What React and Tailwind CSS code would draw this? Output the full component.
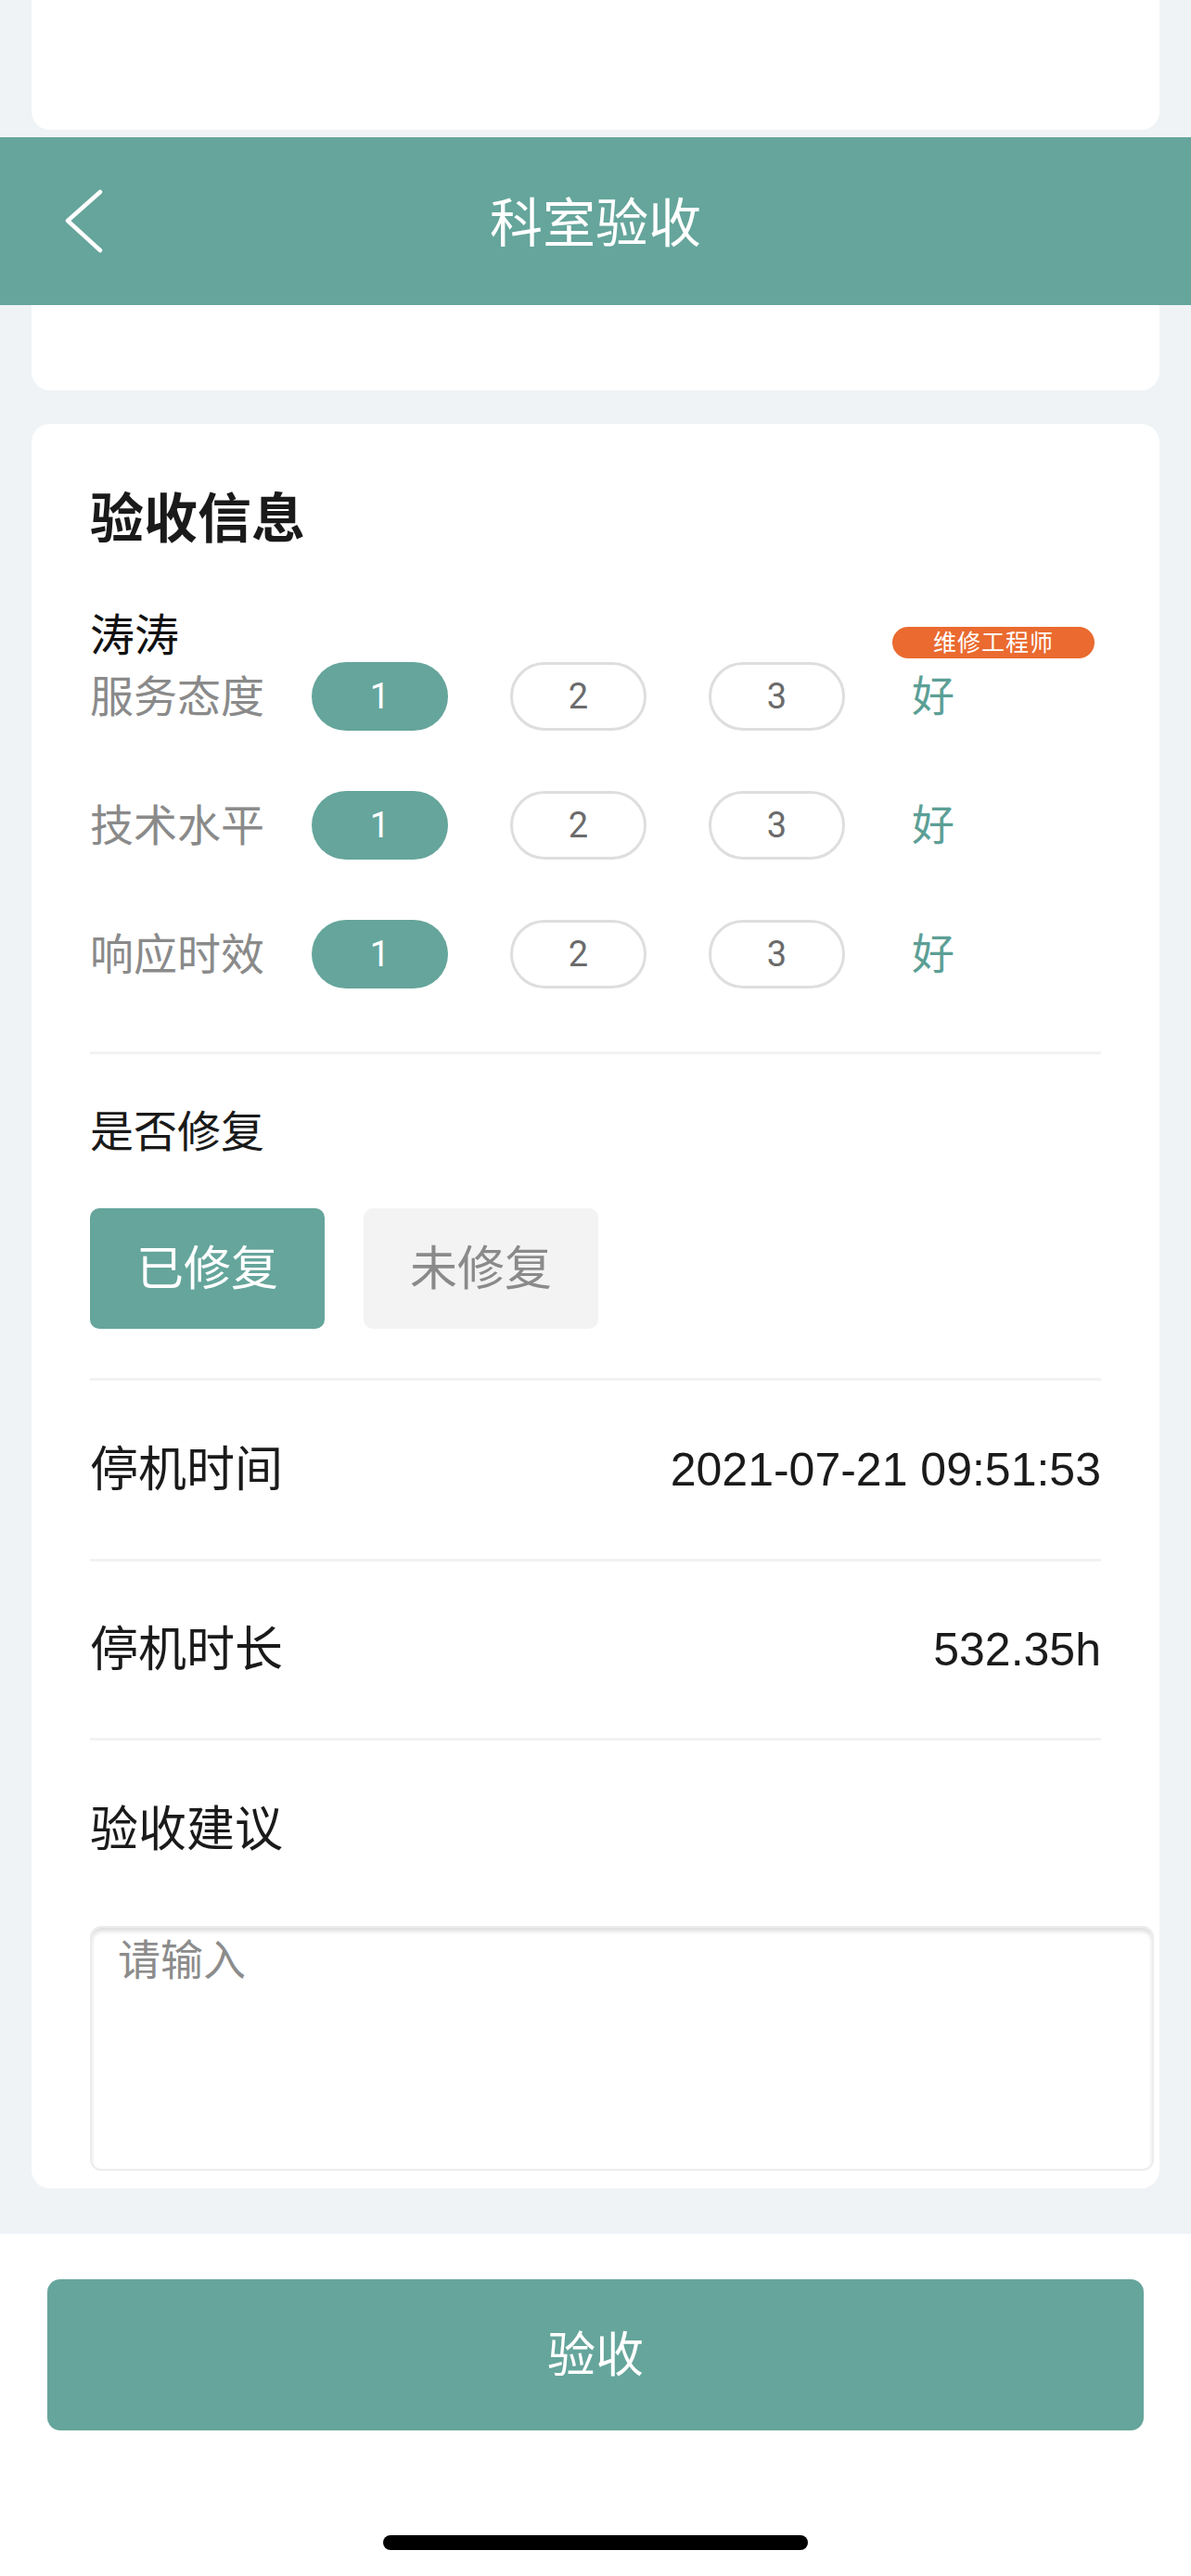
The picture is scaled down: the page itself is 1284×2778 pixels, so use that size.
import React from "react";

function Pill({ n, active }) {
  return (
    <div
      className={
        active
          ? "w-[147px] h-[74px] rounded-[37px] bg-[#65a59b] text-white flex items-center justify-center font-['Roboto',sans-serif] text-[38px] leading-none"
          : "w-[147px] h-[74px] rounded-[37px] border-[3px] border-[#dedede] bg-white text-[#6b6b6b] flex items-center justify-center font-['Roboto',sans-serif] text-[38px] leading-none"
      }
    >
      {n}
    </div>
  );
}

function RatingRow({ label }) {
  return (
    <div className="flex items-center h-[74px]">
      <div className="w-[239px] text-[47px] leading-none text-[#8a8a8a]">{label}</div>
      <div className="flex gap-[67px]">
        <Pill n="1" active />
        <Pill n="2" />
        <Pill n="3" />
      </div>
      <div className="ml-[72px] text-[46px] leading-none text-[#5c9f96]">好</div>
    </div>
  );
}

export default function App() {
  return (
    <div className="w-[1284px] h-[2778px] bg-[#eff3f6] flex flex-col font-['Liberation_Sans','Noto_Sans_CJK_SC',sans-serif] text-[#1a1a1a]">
      {/* top card remnant */}
      <div className="mx-[34px] h-[140px] shrink-0 bg-white rounded-b-[20px]" />

      {/* header */}
      <div className="mt-[8px] h-[181px] shrink-0 bg-[#65a59b] relative flex items-center justify-center">
        <svg
          className="absolute left-[66px] top-[54px]"
          width="50"
          height="74"
          viewBox="0 0 50 74"
        >
          <path
            d="M42 5 L7 36 L42 68"
            stroke="white"
            strokeWidth="4.5"
            fill="none"
            strokeLinecap="round"
            strokeLinejoin="round"
          />
        </svg>
        <span className="text-[57px] leading-none text-white mt-[6px]">科室验收</span>
      </div>

      {/* card remnant under header */}
      <div className="mx-[34px] h-[92px] shrink-0 bg-white rounded-b-[20px]" />

      {/* main card */}
      <div className="mt-[36px] mx-[34px] h-[1903px] shrink-0 bg-white rounded-[20px] px-[63px] pt-[74px] flex flex-col">
        <div className="text-[58px] leading-none font-bold text-[#1a1a1a]">验收信息</div>

        <div className="mt-[73px] flex items-end justify-between">
          <div className="text-[48px] leading-none text-[#111] mb-[-2px]">涛涛</div>
          <div className="mr-[7px] -mb-[2px] w-[218px] h-[34px] rounded-full bg-[#ea6a2f] text-white text-[25px] leading-none flex items-center justify-center tracking-[1px]">
            维修工程师
          </div>
        </div>

        <div className="mt-[6px] flex flex-col gap-[65px]">
          <RatingRow label="服务态度" />
          <RatingRow label="技术水平" />
          <RatingRow label="响应时效" />
        </div>

        <div className="mt-[68px] h-[3px] bg-[#f2f2f2]" />

        <div className="mt-[60px] text-[47px] leading-none text-[#1a1a1a]">是否修复</div>

        <div className="mt-[59px] flex gap-[42px]">
          <div className="w-[253px] h-[130px] rounded-[10px] bg-[#65a59b] text-white text-[51px] leading-none flex items-center justify-center">
            已修复
          </div>
          <div className="w-[253px] h-[130px] rounded-[10px] bg-[#f3f3f3] text-[#8a8a8a] text-[51px] leading-none flex items-center justify-center">
            未修复
          </div>
        </div>

        <div className="mt-[53px] h-[3px] bg-[#f2f2f2]" />

        <div className="h-[192px] flex items-center justify-between">
          <div className="text-[52px] leading-none">停机时间</div>
          <div className="text-[50px] leading-none">2021-07-21 09:51:53</div>
        </div>

        <div className="h-[3px] bg-[#f2f2f2]" />

        <div className="h-[190px] flex items-center justify-between">
          <div className="text-[52px] leading-none">停机时长</div>
          <div className="text-[50px] leading-none">532.35h</div>
        </div>

        <div className="h-[3px] bg-[#f2f2f2]" />

        <div className="mt-[70px] text-[52px] leading-none">验收建议</div>

        <textarea
          className="mt-[78px] w-[1147px] h-[264px] shrink-0 border-2 border-[#ececec] rounded-[12px] shadow-[inset_0_4px_4px_rgba(0,0,0,0.13)] pl-[28px] pt-[8px] text-[46px] leading-[1.2] placeholder:text-[#8c8c8c] resize-none outline-none bg-white"
          placeholder="请输入"
        />
      </div>

      {/* footer */}
      <div className="mt-[49px] flex-1 bg-white flex flex-col items-center">
        <div className="mt-[49px] w-[1182px] h-[163px] rounded-[14px] bg-[#65a59b] text-white text-[52px] leading-none flex items-center justify-center">
          验收
        </div>
        <div className="mt-[113px] w-[458px] h-[16px] rounded-full bg-black" />
      </div>
    </div>
  );
}
